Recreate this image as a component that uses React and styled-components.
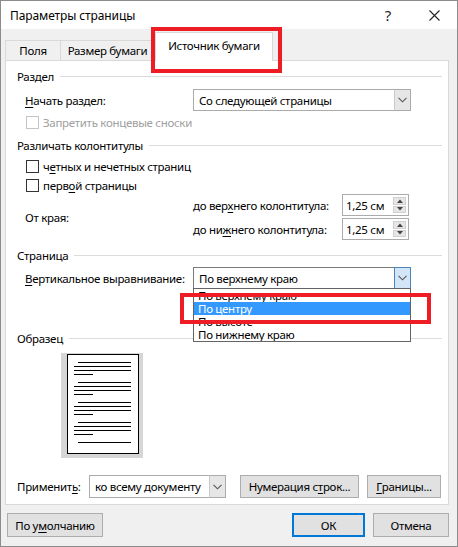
import React from "react";
import styled, { createGlobalStyle, css } from "styled-components";

const Global = createGlobalStyle`
  html, body { margin: 0; padding: 0; background: #f0f0f0; }
  body { font-family: "Noto Sans", "Segoe UI", sans-serif; font-size: 11.5px; letter-spacing: -0.3px; color: #000; }
  * { box-sizing: border-box; }
`;

const Window = styled.div`
  position: relative;
  width: 458px;
  height: 547px;
  border: 1px solid #8c8c8c;
  background: #f0f0f0;
  display: flex;
  flex-direction: column;
  overflow: hidden;
`;

const TitleBar = styled.div`
  height: 28px;
  background: #fff;
  display: flex;
  align-items: center;
  padding-left: 9px;
  font-size: 12px;
  letter-spacing: -0.1px;
`;

const TitleText = styled.div`
  flex: 1;
`;

const TitleIcon = styled.div`
  width: 46px;
  height: 28px;
  display: flex;
  align-items: center;
  justify-content: center;
  font-size: 15px;
  color: #222;
`;

const Body = styled.div`
  flex: 1;
  display: flex;
  flex-direction: column;
  padding: 0 8px 0 4px;
`;

const TabStrip = styled.div`
  height: 31px;
  display: flex;
  align-items: flex-end;
  position: relative;
  z-index: 1;
`;

const Tab = styled.div`
  height: 20px;
  width: ${(p) => p.$w}px;
  display: flex;
  align-items: center;
  justify-content: center;
  white-space: nowrap;
  background: #f0f0f0;
  border: 1px solid #d9d9d9;
  border-bottom: none;
  border-left: ${(p) => (p.$first ? "1px solid #d9d9d9" : "none")};
  ${(p) =>
    p.$active &&
    css`
      background: #fff;
      border-left: 1px solid #d9d9d9;
      margin-bottom: -1px;
      height: 29px;
      padding-bottom: 3px;
    `}
`;

const Panel = styled.div`
  height: 445px;
  background: #fff;
  border: 1px solid #d9d9d9;
  padding: 6px 6px 0 11px;
  display: flex;
  flex-direction: column;
`;

const SectionHeader = styled.div`
  height: 16px;
  display: flex;
  align-items: center;
  white-space: nowrap;
  margin-top: ${(p) => p.$mt || 0}px;
  &::after {
    content: "";
    flex: 1;
    height: 1px;
    background: #dcdcdc;
    margin-left: 6px;
  }
`;

const Row = styled.div`
  display: flex;
  align-items: center;
  white-space: nowrap;
  height: ${(p) => p.$h || 16}px;
  margin-top: ${(p) => p.$mt || 0}px;
  padding-left: ${(p) => (p.$indent === undefined ? 8 : p.$indent)}px;
  color: ${(p) => (p.$disabled ? "#a0a0a0" : "#000")};
`;

const Label = styled.div`
  width: ${(p) => p.$w}px;
  flex-shrink: 0;
  white-space: nowrap;
`;

const U = styled.span`
  text-decoration: underline;
  text-underline-offset: 2px;
`;

const Combo = styled.div`
  position: relative;
  width: ${(p) => p.$w}px;
  height: ${(p) => p.$h || 22}px;
  border: 1px solid ${(p) => (p.$active ? "#7a7a7a" : "#ababab")};
  background: #fff;
  display: flex;
  align-items: center;
`;

const ComboText = styled.div`
  flex: 1;
  padding-left: 5px;
  white-space: nowrap;
  overflow: hidden;
`;

const ComboArrow = styled.div`
  width: 17px;
  display: flex;
  align-items: center;
  justify-content: center;
  background: ${(p) => (p.$active ? "#d3e6f7" : "#e6e6e6")};
  border: 1px solid ${(p) => (p.$active ? "#4a86b8" : "#c9c9c9")};
  margin: -1px -1px -1px 0;
  height: calc(100% + 2px);
  ${(p) =>
    !p.$active &&
    css`
      border-top-color: #ababab;
      border-right-color: #ababab;
      border-bottom-color: #ababab;
    `}
`;

const Chevron = () => (
  <svg width="9" height="6" viewBox="0 0 9 6">
    <path d="M0.5 0.8 L4.5 4.8 L8.5 0.8" fill="none" stroke="#555" strokeWidth="1.1" />
  </svg>
);

const DropList = styled.div`
  position: absolute;
  left: -1px;
  top: 100%;
  width: calc(100% + 2px);
  background: #fff;
  border: 1px solid #646464;
  z-index: 3;
`;

const DropItem = styled.div`
  height: 13px;
  line-height: 13px;
  padding-left: 4px;
  overflow: hidden;
  background: ${(p) => (p.$selected ? "#3399ff" : "#fff")};
  color: ${(p) => (p.$selected ? "#fff" : "#000")};
  white-space: nowrap;
`;

const CheckBox = styled.div`
  width: 13px;
  height: 13px;
  border: 1px solid ${(p) => (p.$disabled ? "#c4c4c4" : "#333")};
  background: #fff;
  margin: 0 4px 0 1px;
`;

const MarginBlock = styled.div`
  display: flex;
  align-items: center;
  margin-top: 1px;
  padding-left: 8px;
`;

const SpinRows = styled.div`
  display: flex;
  flex-direction: column;
  gap: 2px;
`;

const SpinRow = styled.div`
  display: flex;
  align-items: center;
  height: 22px;
`;

const Spinner = styled.div`
  width: 67px;
  height: 22px;
  border: 1px solid #ababab;
  background: #fff;
  display: flex;
  align-items: stretch;
`;

const SpinText = styled.div`
  flex: 1;
  padding-left: 3px;
  display: flex;
  align-items: center;
  white-space: nowrap;
`;

const SpinButtons = styled.div`
  width: 13px;
  margin: 2px 2px 2px 0;
  display: flex;
  flex-direction: column;
  gap: 1px;
`;

const SpinButton = styled.div`
  flex: 1;
  background: #e6e6e6;
  border: 1px solid #cfcfcf;
  display: flex;
  align-items: center;
  justify-content: center;
`;

const Tri = ({ up }) => (
  <svg width="6" height="4" viewBox="0 0 6 4">
    <path d={up ? "M0 4 L3 0.5 L6 4 Z" : "M0 0 L3 3.5 L6 0 Z"} fill="#444" />
  </svg>
);

const PreviewFrame = styled.div`
  width: 82px;
  height: 105px;
  margin: 7px 0 0 44px;
  background: #d6d6d6;
  padding: 1px 4px 4px 6px;
`;

const Page = styled.div`
  width: 72px;
  height: 100px;
  background: #fff;
  border: 1px solid #000;
`;

const ApplyRow = styled.div`
  display: flex;
  align-items: center;
  height: 23px;
  margin-top: 17px;
`;

const Button = styled.div`
  width: ${(p) => p.$w}px;
  height: ${(p) => p.$h || 23}px;
  margin-left: ${(p) => p.$ml || 0}px;
  background: #e1e1e1;
  border: ${(p) => (p.$default ? "2px solid #0078d7" : "1px solid #adadad")};
  display: flex;
  align-items: center;
  justify-content: center;
  white-space: nowrap;
`;

const ButtonBar = styled.div`
  display: flex;
  align-items: center;
  margin-top: 8px;
  padding-left: 2px;
`;

const Spacer = styled.div`
  flex: 1;
`;

const RedFrame = styled.div`
  position: absolute;
  left: ${(p) => p.$x}px;
  top: ${(p) => p.$y}px;
  width: ${(p) => p.$w}px;
  height: ${(p) => p.$h}px;
  border: 4px solid #ee1c25;
  z-index: 5;
  pointer-events: none;
`;

const groups = [7, 27, 47, 67, 87];

const PageLines = () => (
  <svg width="70" height="98" viewBox="0 0 70 98" style={{ display: "block" }}>
    {groups.map((y, i) => (
      <g key={i} stroke="#000" strokeWidth="1">
        <line x1="10" x2="63" y1={y + 0.5} y2={y + 0.5} />
        {i < 4 && (
          <>
            <line x1="6" x2="63" y1={y + 4.5} y2={y + 4.5} />
            <line x1="6" x2="63" y1={y + 8.5} y2={y + 8.5} />
            <line x1="6" x2="25" y1={y + 12.5} y2={y + 12.5} />
          </>
        )}
      </g>
    ))}
  </svg>
);

const SpinBox = () => (
  <Spinner>
    <SpinText>1,25 см</SpinText>
    <SpinButtons>
      <SpinButton>
        <Tri up />
      </SpinButton>
      <SpinButton>
        <Tri />
      </SpinButton>
    </SpinButtons>
  </Spinner>
);

export default function App() {
  return (
    <>
      <Global />
      <Window>
        <TitleBar>
          <TitleText>Параметры страницы</TitleText>
          <TitleIcon>?</TitleIcon>
          <TitleIcon>
            <svg width="11" height="11" viewBox="0 0 11 11">
              <path d="M0.5 0.5 L10.5 10.5 M10.5 0.5 L0.5 10.5" stroke="#222" strokeWidth="1.1" />
            </svg>
          </TitleIcon>
        </TitleBar>
        <Body>
          <TabStrip>
            <Tab $first $w={56}>Поля</Tab>
            <Tab $w={94}>Размер бумаги</Tab>
            <Tab $active $w={118}>Источник бумаги</Tab>
          </TabStrip>
          <Panel>
            <SectionHeader $mt={1}>Раздел</SectionHeader>
            <Row $h={22} $mt={5}>
              <Label $w={168}>
                <U>Н</U>ачать раздел:
              </Label>
              <Combo $w={218}>
                <ComboText>Со следующей страницы</ComboText>
                <ComboArrow>
                  <Chevron />
                </ComboArrow>
              </Combo>
            </Row>
            <Row $mt={3} $disabled>
              <CheckBox $disabled />
              Запретить концевые сноски
            </Row>
            <SectionHeader $mt={7}>Различать колонтитулы</SectionHeader>
            <Row $mt={5}>
              <CheckBox />ч<U>е</U>тных и нечетных страниц
            </Row>
            <Row $mt={3}>
              <CheckBox />перв<U>о</U>й страницы
            </Row>
            <MarginBlock>
              <Label $w={168}>От края:</Label>
              <SpinRows>
                <SpinRow>
                  <Label $w={149}>
                    до вер<U>х</U>него колонтитула:
                  </Label>
                  <SpinBox />
                </SpinRow>
                <SpinRow>
                  <Label $w={149}>
                    до ни<U>ж</U>него колонтитула:
                  </Label>
                  <SpinBox />
                </SpinRow>
              </SpinRows>
            </MarginBlock>
            <SectionHeader $mt={7}>Страница</SectionHeader>
            <Row $h={22} $mt={4}>
              <Label $w={168}>
                <U>В</U>ертикальное выравнивание:
              </Label>
              <Combo $w={218} $active>
                <ComboText>По верхнему краю</ComboText>
                <ComboArrow $active>
                  <Chevron />
                </ComboArrow>
                <DropList>
                  <DropItem>По верхнему краю</DropItem>
                  <DropItem $selected>По центру</DropItem>
                  <DropItem>По высоте</DropItem>
                  <DropItem>По нижнему краю</DropItem>
                </DropList>
              </Combo>
            </Row>
            <SectionHeader $mt={41}>Образец</SectionHeader>
            <PreviewFrame>
              <Page>
                <PageLines />
              </Page>
            </PreviewFrame>
            <ApplyRow>
              <Label $w={72}>
                Применит<U>ь</U>:
              </Label>
              <Combo $w={137} $h={23}>
                <ComboText>ко всему документу</ComboText>
                <ComboArrow>
                  <Chevron />
                </ComboArrow>
              </Combo>
              <Button $w={119} $ml={14}>
                Нумерация с<U>т</U>рок...
              </Button>
              <Button $w={74} $ml={8}>
                <U>Г</U>раницы...
              </Button>
            </ApplyRow>
          </Panel>
          <ButtonBar>
            <Button $w={96} $h={24}>
              По у<U>м</U>олчанию
            </Button>
            <Spacer />
            <Button $w={73} $h={24} $default>
              ОК
            </Button>
            <Button $w={76} $h={24} $ml={8}>
              Отмена
            </Button>
          </ButtonBar>
        </Body>
        <RedFrame $x={150} $y={26} $w={131} $h={46} />
        <RedFrame $x={179} $y={292} $w={251} $h={31} />
      </Window>
    </>
  );
}
